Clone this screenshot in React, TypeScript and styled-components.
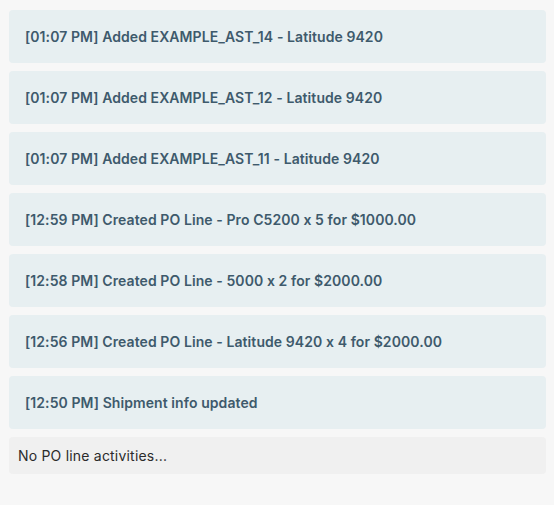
import styled, {createGlobalStyle} from "styled-components";

const GlobalStyle = createGlobalStyle`
  html, body {
    margin: 0;
    padding: 0;
    background-color: #f7f7f7;
  }
`;

const Page = styled.div`
  font-family: "Inter", "Open Sans", sans-serif;
  font-feature-settings: "calt" 0;
  width: 537px;
  padding: 10px 8px 0 9px;
  display: flex;
  flex-direction: column;
  gap: 8px;
`;

const ActivityCard = styled.div`
  height: 53px;
  box-sizing: border-box;
  display: flex;
  align-items: center;
  padding: 0 16px 1px;
  background-color: #e7eff1;
  border-radius: 4px;
  color: #3e5a6c;
  font-size: 14px;
  font-weight: 600;
  letter-spacing: 0.08px;
`;

const EmptyNote = styled.div`
  height: 37px;
  box-sizing: border-box;
  display: flex;
  align-items: center;
  padding: 0 9px;
  background-color: #f0f0f0;
  border-radius: 4px;
  color: #2b2b2b;
  font-size: 14px;
  letter-spacing: 0.2px;
`;

const activities = [
  "[01:07 PM] Added EXAMPLE_AST_14 - Latitude 9420",
  "[01:07 PM] Added EXAMPLE_AST_12 - Latitude 9420",
  "[01:07 PM] Added EXAMPLE_AST_11 - Latitude 9420",
  "[12:59 PM] Created PO Line - Pro C5200 x 5 for $1000.00",
  "[12:58 PM] Created PO Line - 5000 x 2 for $2000.00",
  "[12:56 PM] Created PO Line - Latitude 9420 x 4 for $2000.00",
  "[12:50 PM] Shipment info updated",
];

export default function App() {
  return (<>
    <GlobalStyle />
    <Page>
      {activities.map((text) => (
        <ActivityCard key={text}>{text}</ActivityCard>
      ))}
      <EmptyNote>No PO line activities...</EmptyNote>
    </Page>
  </>);
}
